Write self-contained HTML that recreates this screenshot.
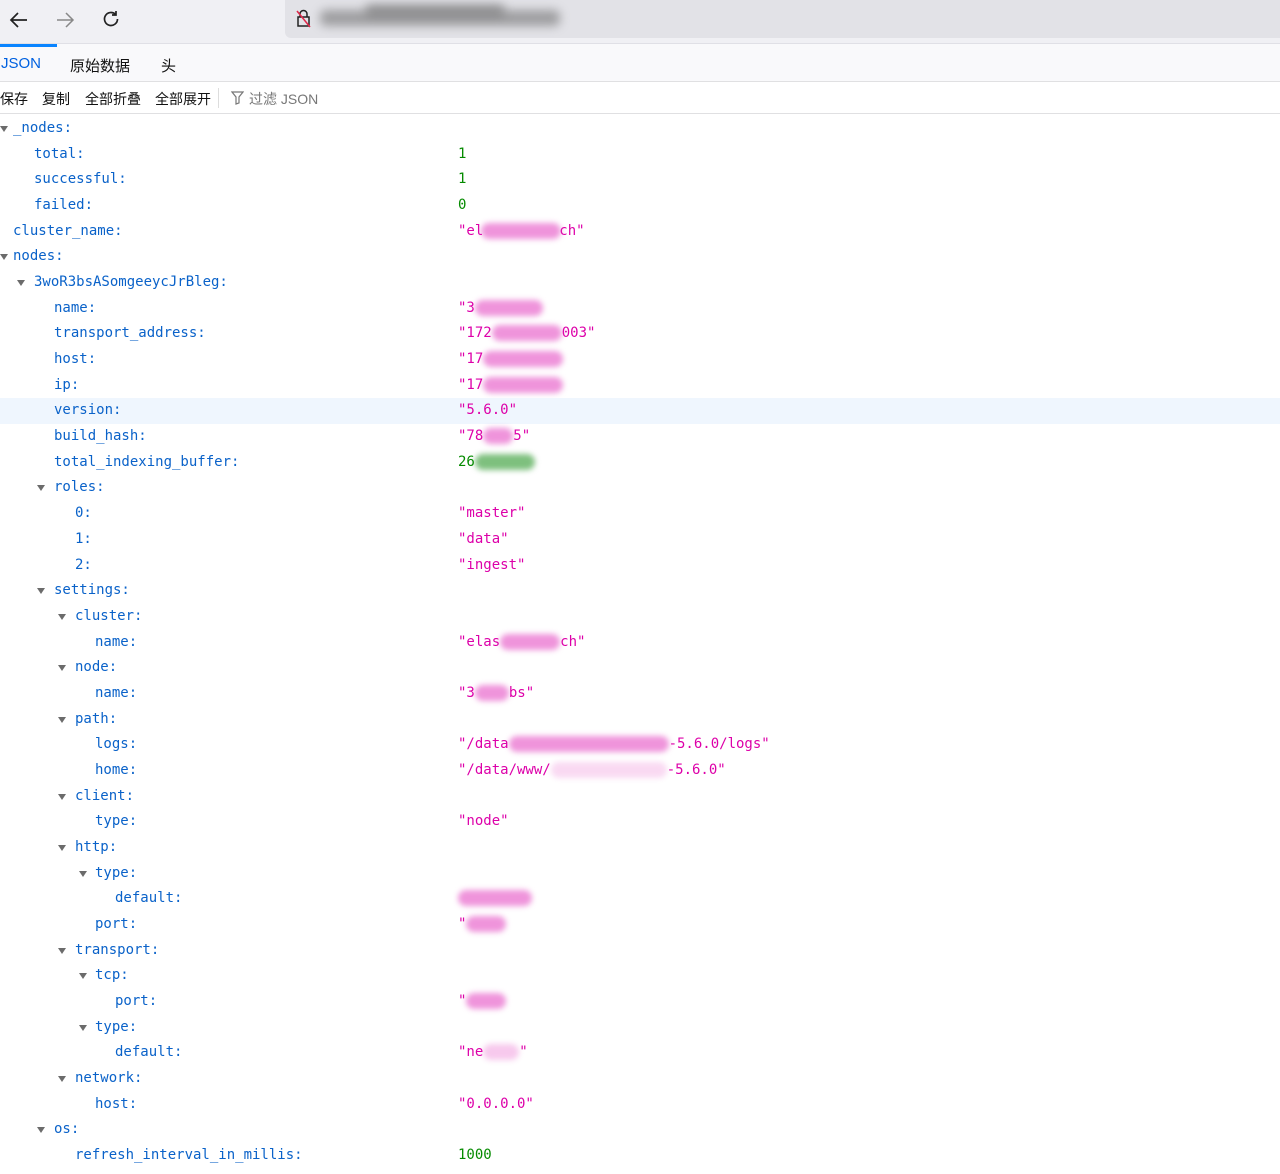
<!DOCTYPE html>
<html><head><meta charset="utf-8"><style>
*{margin:0;padding:0;box-sizing:border-box}
body{width:1280px;height:1172px;overflow:hidden;background:#fff;font-family:"Liberation Sans","Noto Sans CJK SC",sans-serif;position:relative}
.top{position:absolute;left:0;top:0;width:1280px;height:44px;background:#f0f0f4;border-bottom:1px solid #e0e0e6}
.url{position:absolute;left:285px;top:0;width:995px;height:38px;background:#e2e2e7;border-radius:0 0 0 6px}
.tabs{position:absolute;left:0;top:44px;width:1280px;height:38px;background:#f9f9fb;border-bottom:1px solid #e0e0e2;font-size:15px}
.tabs span{position:absolute;top:11px;color:#111}
.tb{position:absolute;left:0;top:82px;width:1280px;height:32px;background:#fff;border-bottom:1px solid #e0e0e2;font-size:14px}
.tb span{position:absolute;top:7px;color:#111}
#rows{position:absolute;left:0;top:2px;width:1280px;height:1172px}
.r{position:absolute;left:0;width:1280px;height:25.675px;line-height:25.675px;font-family:"DejaVu Sans Mono","Liberation Mono",monospace;font-size:14px;white-space:pre}
.k{position:absolute;color:#0a62c9}
.v{position:absolute;left:458px;color:#dd00a9}
.n{color:#058b00}
.t{position:absolute;top:10px;width:0;height:0;border-left:4.5px solid transparent;border-right:4.5px solid transparent;border-top:6px solid #6b6b6b}
.hl{background:#eff6fe}
.b{display:inline-block;height:16px;vertical-align:middle;background:rgba(225,60,190,.55);filter:blur(3px);border-radius:8px}
.bg{background:rgba(40,150,40,.6)}
.blur{position:absolute;filter:blur(5px);background:#666;border-radius:6px;opacity:.55}
</style></head><body>
<div class="top">
<svg style="position:absolute;left:8px;top:9px" width="22" height="22" viewBox="0 0 22 22"><path d="M19 11H4M10 4l-7 7 7 7" fill="none" stroke="#222" stroke-width="1.7"/></svg>
<svg style="position:absolute;left:54px;top:9px" width="22" height="22" viewBox="0 0 22 22"><path d="M3 11h15M12 4l7 7-7 7" fill="none" stroke="#888" stroke-width="1.5"/></svg>
<svg style="position:absolute;left:100px;top:8px" width="22" height="22" viewBox="0 0 22 22"><path d="M17.5 11a6.5 6.5 0 1 1-2-4.7M16 3v4h-4" fill="none" stroke="#222" stroke-width="1.7"/></svg>
<div class="url">
<svg style="position:absolute;left:10px;top:8px" width="18" height="20" viewBox="0 0 18 20"><rect x="3" y="9" width="11" height="9" fill="none" stroke="#222" stroke-width="1.5"/><path d="M5 9V6a3.5 3.5 0 0 1 7 0v3" fill="none" stroke="#222" stroke-width="1.5"/><path d="M2 3l13 16" stroke="#e0284a" stroke-width="1.5"/></svg>
<div class="blur" style="left:35px;top:10px;width:240px;height:16px"></div>
<div class="blur" style="left:80px;top:4px;width:140px;height:12px"></div>
</div>
</div>
<div class="tabs">
<div style="position:absolute;left:0;top:0;width:57px;height:3px;background:#0a84ff"></div>
<span style="left:1px;color:#0061e0">JSON</span><span style="left:70px">原始数据</span><span style="left:161px">头</span>
</div>
<div class="tb">
<span style="left:0">保存</span><span style="left:42px">复制</span><span style="left:85px">全部折叠</span><span style="left:155px">全部展开</span>
<div style="position:absolute;left:218px;top:6px;width:1px;height:20px;background:#ddd"></div>
<svg style="position:absolute;left:231px;top:9px" width="13" height="14" viewBox="0 0 13 14"><path d="M1 1h11L8 6v6l-3 1V6z" fill="none" stroke="#777" stroke-width="1.2"/></svg>
<span style="left:249px;color:#777">过滤 JSON</span>
</div>
<div id="rows">
<div class="r" style="top:114px"><i class="t" style="left:0"></i><span class="k" style="left:13px">_nodes:</span></div>
<div class="r" style="top:139.7px"><span class="k" style="left:34px">total:</span><span class="v n">1</span></div>
<div class="r" style="top:165.4px"><span class="k" style="left:34px">successful:</span><span class="v n">1</span></div>
<div class="r" style="top:191px"><span class="k" style="left:34px">failed:</span><span class="v n">0</span></div>
<div class="r" style="top:216.7px"><span class="k" style="left:13px">cluster_name:</span><span class="v">"el<span class="b" style="width:80px;margin:0 -2px"></span>ch"</span></div>
<div class="r" style="top:242.4px"><i class="t" style="left:0"></i><span class="k" style="left:13px">nodes:</span></div>
<div class="r" style="top:268px"><i class="t" style="left:17px"></i><span class="k" style="left:34px">3woR3bsASomgeeycJrBleg:</span></div>
<div class="r" style="top:293.7px"><span class="k" style="left:54px">name:</span><span class="v">"3<span class="b" style="width:68px"></span></span></div>
<div class="r" style="top:319.4px"><span class="k" style="left:54px">transport_address:</span><span class="v">"172<span class="b" style="width:70px"></span>003"</span></div>
<div class="r" style="top:345.1px"><span class="k" style="left:54px">host:</span><span class="v">"17<span class="b" style="width:80px"></span></span></div>
<div class="r" style="top:370.7px"><span class="k" style="left:54px">ip:</span><span class="v">"17<span class="b" style="width:80px"></span></span></div>
<div class="r hl" style="top:396.4px"><span class="k" style="left:54px">version:</span><span class="v">"5.6.0"</span></div>
<div class="r" style="top:422.1px"><span class="k" style="left:54px">build_hash:</span><span class="v">"78<span class="b" style="width:30px"></span>5"</span></div>
<div class="r" style="top:447.8px"><span class="k" style="left:54px">total_indexing_buffer:</span><span class="v n">26<span class="b bg" style="width:60px"></span></span></div>
<div class="r" style="top:473.4px"><i class="t" style="left:37px"></i><span class="k" style="left:54px">roles:</span></div>
<div class="r" style="top:499.1px"><span class="k" style="left:75px">0:</span><span class="v">"master"</span></div>
<div class="r" style="top:524.8px"><span class="k" style="left:75px">1:</span><span class="v">"data"</span></div>
<div class="r" style="top:550.5px"><span class="k" style="left:75px">2:</span><span class="v">"ingest"</span></div>
<div class="r" style="top:576.1px"><i class="t" style="left:37px"></i><span class="k" style="left:54px">settings:</span></div>
<div class="r" style="top:601.8px"><i class="t" style="left:58px"></i><span class="k" style="left:75px">cluster:</span></div>
<div class="r" style="top:627.5px"><span class="k" style="left:95px">name:</span><span class="v">"elas<span class="b" style="width:60px"></span>ch"</span></div>
<div class="r" style="top:653.2px"><i class="t" style="left:58px"></i><span class="k" style="left:75px">node:</span></div>
<div class="r" style="top:678.8px"><span class="k" style="left:95px">name:</span><span class="v">"3<span class="b" style="width:34px"></span>bs"</span></div>
<div class="r" style="top:704.5px"><i class="t" style="left:58px"></i><span class="k" style="left:75px">path:</span></div>
<div class="r" style="top:730.2px"><span class="k" style="left:95px">logs:</span><span class="v">"/data<span class="b" style="width:160px"></span>-5.6.0/logs"</span></div>
<div class="r" style="top:755.9px"><span class="k" style="left:95px">home:</span><span class="v">"/data/www/<span class="b" style="width:116px;opacity:.35"></span>-5.6.0"</span></div>
<div class="r" style="top:781.5px"><i class="t" style="left:58px"></i><span class="k" style="left:75px">client:</span></div>
<div class="r" style="top:807.2px"><span class="k" style="left:95px">type:</span><span class="v">"node"</span></div>
<div class="r" style="top:832.9px"><i class="t" style="left:58px"></i><span class="k" style="left:75px">http:</span></div>
<div class="r" style="top:858.6px"><i class="t" style="left:79px"></i><span class="k" style="left:95px">type:</span></div>
<div class="r" style="top:884.2px"><span class="k" style="left:115px">default:</span><span class="v"><span class="b" style="width:74px"></span></span></div>
<div class="r" style="top:909.9px"><span class="k" style="left:95px">port:</span><span class="v">"<span class="b" style="width:40px"></span></span></div>
<div class="r" style="top:935.6px"><i class="t" style="left:58px"></i><span class="k" style="left:75px">transport:</span></div>
<div class="r" style="top:961.3px"><i class="t" style="left:79px"></i><span class="k" style="left:95px">tcp:</span></div>
<div class="r" style="top:986.9px"><span class="k" style="left:115px">port:</span><span class="v">"<span class="b" style="width:40px"></span></span></div>
<div class="r" style="top:1012.6px"><i class="t" style="left:79px"></i><span class="k" style="left:95px">type:</span></div>
<div class="r" style="top:1038.3px"><span class="k" style="left:115px">default:</span><span class="v">"ne<span class="b" style="width:36px;opacity:.5"></span>"</span></div>
<div class="r" style="top:1064px"><i class="t" style="left:58px"></i><span class="k" style="left:75px">network:</span></div>
<div class="r" style="top:1089.6px"><span class="k" style="left:95px">host:</span><span class="v">"0.0.0.0"</span></div>
<div class="r" style="top:1115.3px"><i class="t" style="left:37px"></i><span class="k" style="left:54px">os:</span></div>
<div class="r" style="top:1141px"><span class="k" style="left:75px">refresh_interval_in_millis:</span><span class="v n">1000</span></div>
</div>
</body></html>
